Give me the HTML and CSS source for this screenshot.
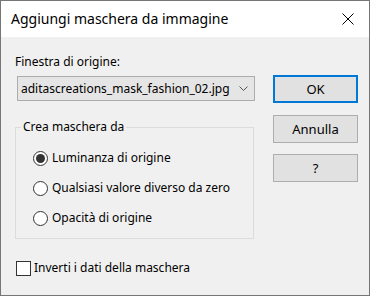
FILE: index.html
```html
<!DOCTYPE html>
<html lang="it">
<head>
	<meta charset="UTF-8" />
	<title>Aggiungi maschera da immagine</title>
	<link rel="stylesheet" href="styles.css">
</head>
<body>
	<div class="window">
		<div class="titlebar">
			<span class="title">Aggiungi maschera da immagine</span>
			<svg class="close" width="12" height="12" viewBox="0 0 12 12"><path d="M0.5 0.5 L11.5 11.5 M11.5 0.5 L0.5 11.5" stroke="#000" stroke-width="1" fill="none"/></svg>
		</div>
		<div class="dialog">
			<div class="left">
				<div class="field-label">Finestra di origine:</div>
				<div class="combo">
					<span>aditascreations_mask_fashion_02.jpg</span>
					<svg width="9" height="5" viewBox="0 0 9 5"><path d="M0.5 0.5 L4.5 4.5 L8.5 0.5" stroke="#555" stroke-width="1" fill="none"/></svg>
				</div>
				<fieldset class="group">
					<legend>Crea maschera da</legend>
					<label class="radio"><span class="dot checked"></span>Luminanza di origine</label>
					<label class="radio"><span class="dot"></span>Qualsiasi valore diverso da zero</label>
					<label class="radio"><span class="dot"></span>Opacità di origine</label>
				</fieldset>
				<label class="check"><span class="box"></span>Inverti i dati della maschera</label>
			</div>
			<div class="buttons">
				<button class="btn default">OK</button>
				<button class="btn">Annulla</button>
				<button class="btn">?</button>
			</div>
		</div>
	</div>
</body>
</html>
```
FILE: styles.css
```css
body, html {
	margin: 0;
	background-color: #f0f0f0;
	font-family: 'Noto Sans', 'Open Sans', sans-serif;
	font-size: 12px;
	color: #000;
}
.window {
	width: 370px;
	height: 296px;
	box-sizing: border-box;
	border: 1px solid #767676;
	background-color: #f0f0f0;
	display: flex;
	flex-direction: column;
}
.titlebar {
	height: 36px;
	background-color: white;
	display: flex;
	align-items: center;
	justify-content: space-between;
	padding: 0 15px 0 10px;
}
.title {
	font-size: 14px;
	margin-top: -1px;
}
.dialog {
	display: flex;
	padding: 17px 11px 0 13px;
}
.left {
	width: 242px;
}
.field-label {
	line-height: 16px;
	padding-left: 1px;
}
.combo {
	margin: 6px 0 0 3px;
	height: 23px;
	border: 1px solid #adadad;
	background-color: #e5e5e5;
	display: flex;
	align-items: center;
	justify-content: space-between;
	padding: 0 6px 0 3px;
	font-size: 12px;
}
.group {
	margin: 18px 0 0 1px;
	padding: 8px 0 0 0;
	border: 1px solid #dcdcdc;
	height: 120px;
	box-sizing: border-box;
	width: 239px;
}
.group legend {
	padding: 0 2px;
	margin-left: 5px;
	line-height: 16px;
}
.radio, .check {
	display: flex;
	align-items: center;
	gap: 4px;
	height: 30px;
	line-height: 16px;
}
.radio {
	margin-left: 17px;
}
.dot {
	width: 13px;
	height: 13px;
	border: 1px solid #333;
	border-radius: 50%;
	background-color: white;
	position: relative;
}
.dot.checked::after {
	content: "";
	position: absolute;
	inset: 2px;
	border-radius: 50%;
	background-color: #333;
}
.check {
	margin: 21px 0 0 2px;
	height: 16px;
	gap: 3px;
}
.box {
	width: 13px;
	height: 13px;
	border: 1px solid #333;
	background-color: white;
}
.buttons {
	display: flex;
	flex-direction: column;
	margin: 21px 0 0 18px;
}
.btn {
	width: 85px;
	height: 28px;
	border: 1px solid #adadad;
	background-color: #e1e1e1;
	font-family: inherit;
	font-size: 13px;
	color: #000;
	padding: 0;
	margin-bottom: 12px;
}
.btn.default {
	border: 2px solid #0078d7;
}
.btn + .btn + .btn {
	margin-top: -1px;
}
```
